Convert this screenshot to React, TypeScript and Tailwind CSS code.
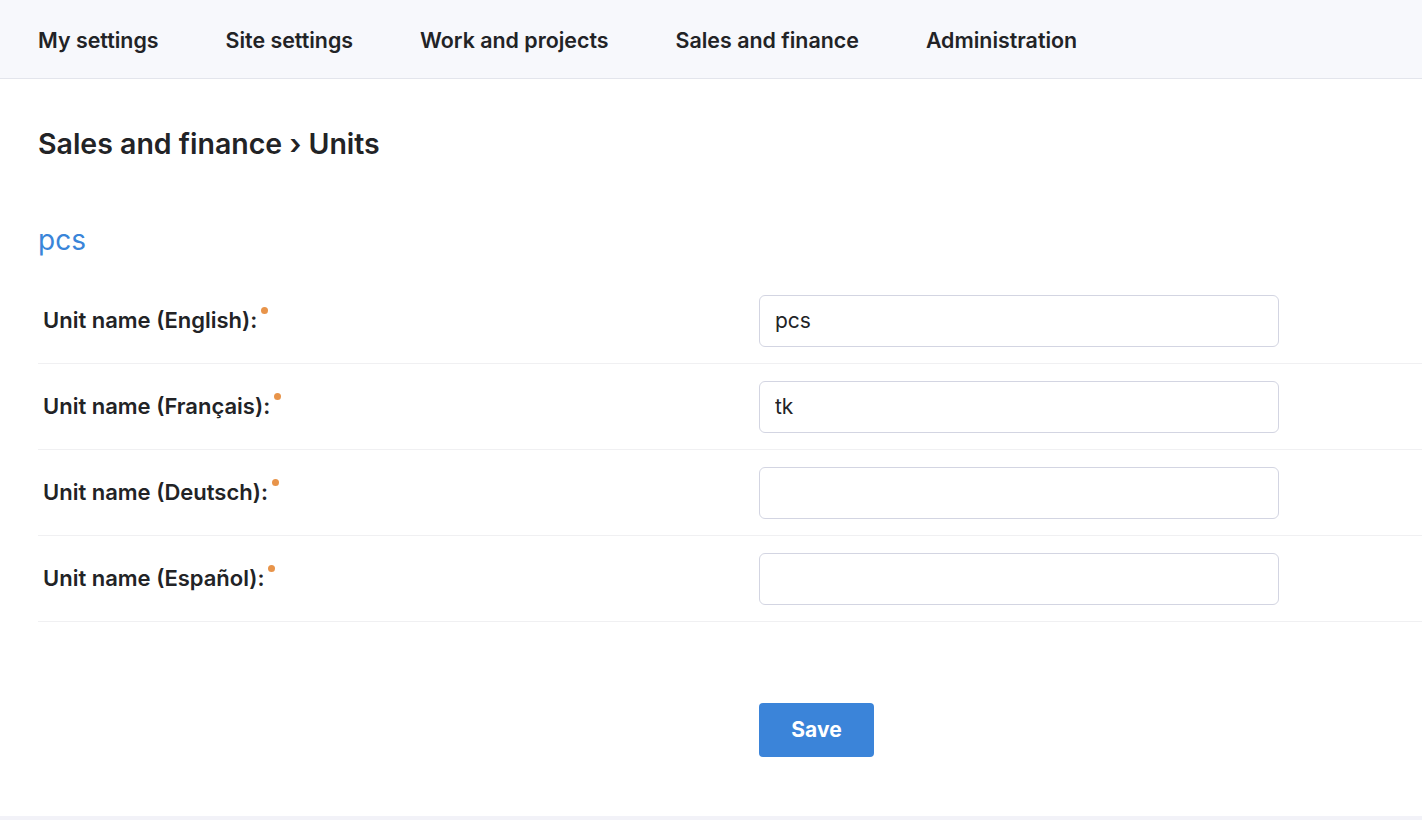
import React from 'react';

// ── Data ─────────────────────────────────────────────────────────────────────

const NAV = ['My settings', 'Site settings', 'Work and projects', 'Sales and finance', 'Administration'];

const FIELDS = [
  { label: 'Unit name (English):', value: 'pcs' },
  { label: 'Unit name (Français):', value: 'tk' },
  { label: 'Unit name (Deutsch):', value: '' },
  { label: 'Unit name (Español):', value: '' },
];

// ── Sub-component: one form row ──────────────────────────────────────────────

function FieldRow({ label, value }: { label: string; value: string }) {
  return (
    <div className="flex items-center h-[86px] border-b border-[#f0f0f2]">
      <div className="w-[721px] shrink-0 pl-[5px]">
        <span className="text-[22px] font-semibold text-[#222326]">
          {label}
          <span className="relative -top-[14px] inline-block w-[7px] h-[7px] rounded-full bg-[#e8944a] ml-[4px]" />
        </span>
      </div>
      <input
        defaultValue={value}
        className="w-[520px] h-[52px] rounded-[6px] border border-[#d3d5e2] px-[15px] text-[21px] text-[#222326] outline-none bg-white"
      />
    </div>
  );
}

// ── Main component ───────────────────────────────────────────────────────────

export default function App() {
  return (
    <div className="min-h-[820px] bg-white flex flex-col" style={{ fontFamily: 'Inter, "Noto Sans", sans-serif' }}>
      {/* Top nav */}
      <nav className="h-[79px] bg-[#f7f8fc] border-b border-[#e3e5ec] flex items-center gap-[67px] pl-[38px]">
        {NAV.map((n) => (
          <span key={n} className="text-[21.4px] font-semibold text-[#222326] pt-[2px]">
            {n}
          </span>
        ))}
      </nav>

      <main className="pl-[38px] flex-1">
        <h1 className="text-[28.5px] font-semibold text-[#222326] mt-[47px] leading-[36px]">
          Sales and finance › Units
        </h1>

        <h2 className="text-[28px] text-[#3a85d9] mt-[61px] leading-[34px]">pcs</h2>

        <div className="mt-[21px]">
          {FIELDS.map((f) => (
            <FieldRow key={f.label} label={f.label} value={f.value} />
          ))}
        </div>

        <div className="pl-[721px] mt-[81px]">
          <button className="w-[115px] h-[54px] rounded-[4px] bg-[#3b84d9] text-white text-[21px] font-bold">
            Save
          </button>
        </div>
      </main>

      <div className="h-[4px] bg-[#f2f2f8] mt-[59px]" />
    </div>
  );
}
